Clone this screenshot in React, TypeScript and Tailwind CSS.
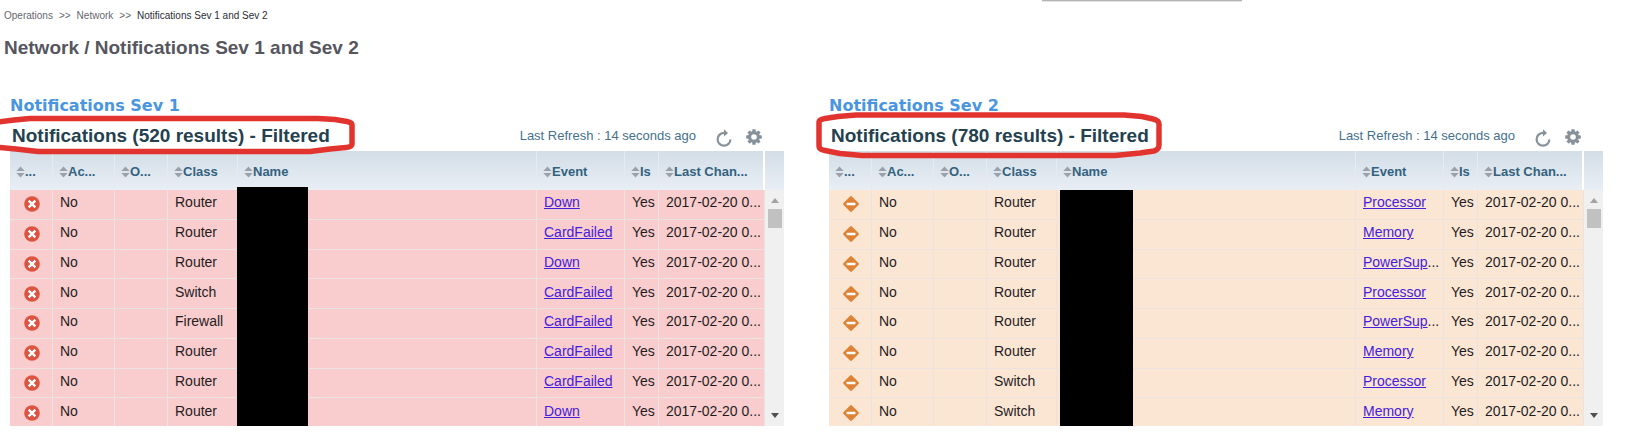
import type { ReactNode } from 'react';

interface NotificationRow {
    cls: string;
    event: string;
    clipped?: boolean;
}

interface Panel {
    id: string;
    title: string;
    heading: string;
    severity: 'critical' | 'major';
    rowColor: string;
    maskClass: string;
    ring: ReactNode;
    rows: NotificationRow[];
}

const columns = [
    { label: '...', name: 'Severity', width: 'w-[43px]' },
    { label: 'Ac...', name: 'Acknowledged', width: 'w-[62px]' },
    { label: 'O...', name: 'Owner', width: 'w-[53px]' },
    { label: 'Class', name: 'Class', width: 'w-[70px]' },
    { label: 'Name', name: 'Name', width: '' },
    { label: 'Event', name: 'Event', width: 'w-[88px]' },
    { label: 'Is', name: 'Is root cause', width: 'w-[34px]' },
    { label: 'Last Chan...', name: 'Last change', width: 'w-[106px]' },
];

const panels: Panel[] = [
    {
        id: 'sev1',
        title: 'Notifications Sev 1',
        heading: 'Notifications (520 results) - Filtered',
        severity: 'critical',
        rowColor: 'bg-[#f9cdcd]',
        maskClass: 'left-[227px] w-[71px] top-9 bottom-0',
        ring: (
            <svg className="absolute -left-3 -top-1 pointer-events-none" width="362" height="48" viewBox="-2 112 362 48" fill="none" stroke="#e2342f" strokeWidth="5.5" strokeLinejoin="round" aria-hidden="true">
                <path d="M-6 122.5L14 120L30 118.5H318L335 119.5L347 121.5Q352 122.5 352 125V144Q352 147 346 147.5L330 149L310 151.5H38L16 149L-6 147" />
            </svg>
        ),
        rows: [
            { cls: 'Router', event: 'Down' },
            { cls: 'Router', event: 'CardFailed' },
            { cls: 'Router', event: 'Down' },
            { cls: 'Switch', event: 'CardFailed' },
            { cls: 'Firewall', event: 'CardFailed' },
            { cls: 'Router', event: 'CardFailed' },
            { cls: 'Router', event: 'CardFailed' },
            { cls: 'Router', event: 'Down' },
        ],
    },
    {
        id: 'sev2',
        title: 'Notifications Sev 2',
        heading: 'Notifications (780 results) - Filtered',
        severity: 'major',
        rowColor: 'bg-[#fbe6d4]',
        maskClass: 'left-[231px] w-[73px] top-[39px] bottom-0',
        ring: (
            <svg className="absolute -left-4 -top-1 pointer-events-none" width="352" height="48" viewBox="813 112 352 48" fill="none" stroke="#e2342f" strokeWidth="5.5" strokeLinejoin="round" aria-hidden="true">
                <path d="M856 115H1124L1142 116.5L1153 119Q1159 120.5 1159 124V145Q1159 149.5 1154 151L1140 153L1115 155.5H862L840 153.5L825 150.5Q819 149.5 819 146V122Q819 119.5 825 118.5L838 116.5Z" />
            </svg>
        ),
        rows: [
            { cls: 'Router', event: 'Processor' },
            { cls: 'Router', event: 'Memory' },
            { cls: 'Router', event: 'PowerSup', clipped: true },
            { cls: 'Router', event: 'Processor' },
            { cls: 'Router', event: 'PowerSup', clipped: true },
            { cls: 'Router', event: 'Memory' },
            { cls: 'Switch', event: 'Processor' },
            { cls: 'Switch', event: 'Memory' },
        ],
    },
];

const SortIcon = () => (
    <svg className="shrink-0" width="9" height="12" viewBox="0 0 9 12" fill="#99a1aa" aria-hidden="true">
        <path d="M4.5 0.5L8.7 5H0.3zM4.5 11.5L0.3 7H8.7z" />
    </svg>
);

const CriticalIcon = () => (
    <svg className="mx-auto block" width="16" height="16" viewBox="0 0 16 16" role="img" aria-label="Critical">
        <circle cx="8" cy="8" r="7.8" fill="#de5240" />
        <path d="M4.7 4.7l6.6 6.6M11.3 4.7l-6.6 6.6" stroke="#fff" strokeWidth="2.4" />
    </svg>
);

const MajorIcon = () => (
    <svg className="mx-auto block" width="16" height="16" viewBox="0 0 16 16" role="img" aria-label="Major">
        <path d="M8 1.5L14.5 8L8 14.5L1.5 8z" fill="#de8336" stroke="#de8336" strokeWidth="2.6" strokeLinejoin="round" />
        <rect x="3.6" y="6.7" width="8.8" height="2.6" rx="0.5" fill="#fff" />
    </svg>
);

const RefreshIcon = () => (
    <svg width="16" height="18" viewBox="0 0 16 18" aria-hidden="true">
        <path d="M8.8 3.9H7.8A6.4 6.4 0 1 0 14.4 10.4" fill="none" stroke="#87919a" strokeWidth="2.2" />
        <path d="M8 0.3L12 4L8 7.6z" fill="#87919a" />
    </svg>
);

const GearIcon = () => (
    <svg width="16" height="16" viewBox="0 0 16 16" aria-hidden="true">
        <g fill="#87919a">
            {[0, 45, 90, 135].map(angle => (
                <rect key={angle} x="6.3" y="0.2" width="3.4" height="15.6" rx="0.6" transform={`rotate(${angle} 8 8)`} />
            ))}
            <circle cx="8" cy="8" r="5.9" />
        </g>
        <circle cx="8" cy="8" r="2.8" fill="#fff" />
    </svg>
);

const ScrollTrack = () => (
    <div className="w-[19px] shrink-0 flex flex-col" aria-hidden="true">
        <div className="h-[39px] bg-linear-to-b from-[#d3dee7] to-[#e9eef5]" />
        <div className="flex-1 bg-[#f0f0f0] flex flex-col items-center justify-between pt-2 pb-2">
            <div className="flex flex-col items-center gap-1.5">
                <svg width="8" height="5" viewBox="0 0 8 5"><path d="M4 0L8 5H0z" fill="#a3a3a3" /></svg>
                <div className="w-3.5 h-[19px] bg-[#c1c1c1]" />
            </div>
            <svg width="8" height="5" viewBox="0 0 8 5"><path d="M0 0H8L4 5z" fill="#505050" /></svg>
        </div>
    </div>
);

const NotificationPanel = ({ panel }: { panel: Panel }) => {
    const cell = `border-r border-b border-[#ebe3e2] pl-[7px] pb-1 whitespace-nowrap overflow-hidden ${panel.rowColor}`;

    return (
        <section aria-labelledby={panel.id}>
            <h2 id={panel.id} className="font-['DejaVu_Sans',sans-serif] font-bold text-base leading-5 text-[#4a95df]">{panel.title}</h2>
            <div className="relative z-10 h-[35px] flex items-center pl-0.5 pr-[22px] pt-1">
                <h3 className="text-[19px] leading-6 font-bold text-[#24414f]">{panel.heading}</h3>
                <span className="ml-auto text-[13px] text-[#44708d]">Last Refresh : 14 seconds ago</span>
                <button type="button" aria-label="Refresh" className="ml-5 mt-1"><RefreshIcon /></button>
                <button type="button" aria-label="Settings" className="ml-3.5 mt-0.5"><GearIcon /></button>
                {panel.ring}
            </div>
            <div className="relative flex h-[275px] overflow-hidden">
                <table className="flex-1 h-[277px] table-fixed border-separate border-spacing-0 text-[14px] leading-4 text-[#1f1c1f]">
                    <thead>
                        <tr className="h-[39px] bg-linear-to-b from-[#d3dee7] to-[#e9eef5]">
                            {columns.map(col => (
                                <th key={col.name} className={`${col.width} p-0 pl-1.5 pt-0.5 border-r border-[#e6ebef] last:border-r-2 last:border-white text-left text-[13px] text-[#33627f] overflow-hidden`}>
                                    <button type="button" aria-label={`Sort by ${col.name}`} className="flex items-center font-bold whitespace-nowrap">
                                        <SortIcon />
                                        {col.label}
                                    </button>
                                </th>
                            ))}
                        </tr>
                    </thead>
                    <tbody>
                        {panel.rows.map((row, i) => (
                            <tr key={i}>
                                <td className={`border-r border-b border-[#ebe3e2] p-0 pl-0.5 ${panel.rowColor}`}>
                                    {panel.severity === 'critical' ? <CriticalIcon /> : <MajorIcon />}
                                </td>
                                <td className={cell}>No</td>
                                <td className={cell} />
                                <td className={cell}>{row.cls}</td>
                                <td className={cell} />
                                <td className={cell}>
                                    <a href="#event" className="text-[#4520dc] underline">{row.event}</a>
                                    {row.clipped && '...'}
                                </td>
                                <td className={cell}>Yes</td>
                                <td className={cell}>2017-02-20 0...</td>
                            </tr>
                        ))}
                    </tbody>
                </table>
                <ScrollTrack />
                <div className={`absolute bg-black ${panel.maskClass}`} />
            </div>
        </section>
    );
};

const App = () => (
    <div className="overflow-x-hidden bg-white font-['Liberation_Sans',Arial,sans-serif] pb-4">
        <div className="flex justify-end pr-[390px]">
            <div className="w-[200px] h-0.5 bg-[#b4b4b4] border-b border-[#e6e6e6]" />
        </div>
        <nav aria-label="Breadcrumb" className="flex gap-1.5 pl-1 pt-1.5 text-[10px] leading-4 text-[#66666f]">
            <a href="#operations">Operations</a>
            <span>&gt;&gt;</span>
            <a href="#network">Network</a>
            <span>&gt;&gt;</span>
            <span className="text-[#2c2c36]">Notifications Sev 1 and Sev 2</span>
        </nav>
        <h1 className="pl-1 pt-3 text-[19px] leading-6 font-bold text-[#55565e]">Network / Notifications Sev 1 and Sev 2</h1>
        <main className="grid grid-cols-2 gap-[45px] pl-2.5 pr-[29px] pt-9">
            {panels.map(panel => (
                <NotificationPanel key={panel.id} panel={panel} />
            ))}
        </main>
    </div>
);

export default App;
